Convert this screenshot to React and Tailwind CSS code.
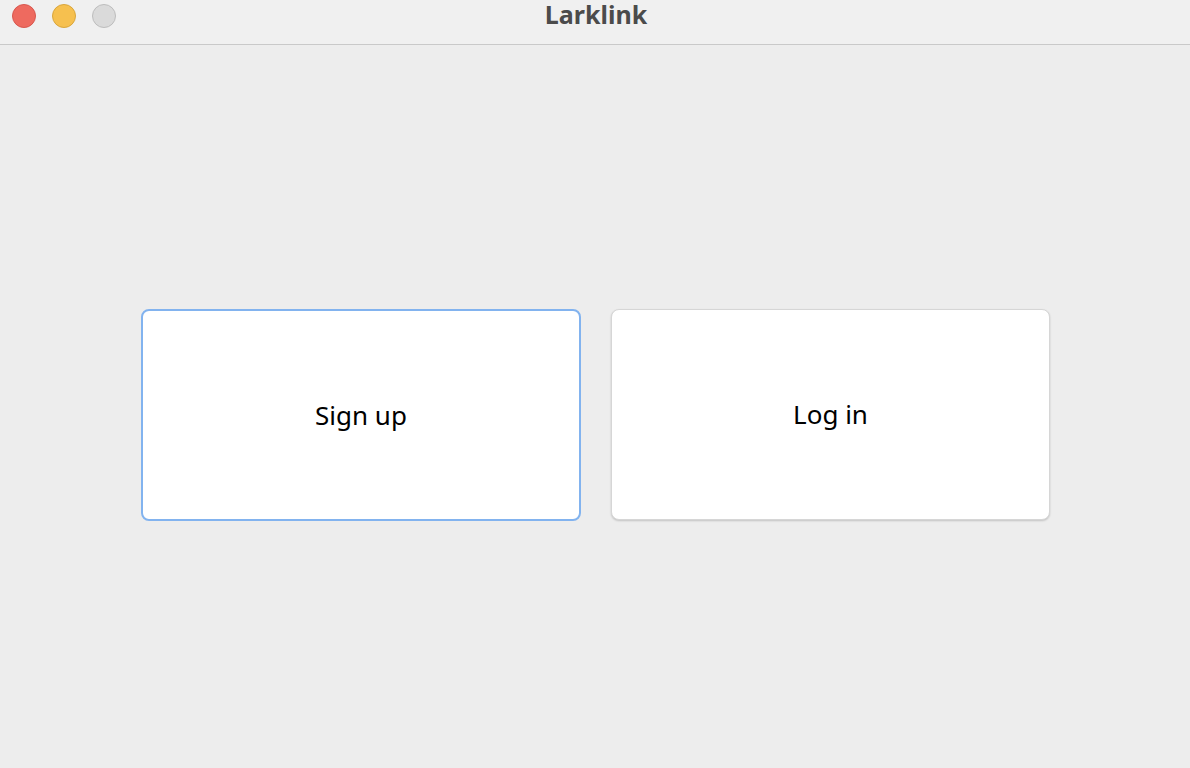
import React from "react";

export default function App() {
  return (
    <div className="flex h-[768px] w-[1190px] flex-col bg-[#ededed] font-['Noto_Sans',sans-serif]">
      <div className="relative flex h-[45px] shrink-0 items-start justify-center border-b border-[#c9c9c9] bg-[#f0f0f0] pt-[1px]">
        <div className="absolute left-[12px] top-[4px] flex gap-[16px]">
          <span className="h-[24px] w-[24px] rounded-full border border-[#d8574e] bg-[#ee6a5f]" />
          <span className="h-[24px] w-[24px] rounded-full border border-[#d9a63c] bg-[#f6c04f]" />
          <span className="h-[24px] w-[24px] rounded-full border border-[#bdbdbd] bg-[#dadada]" />
        </div>
        <h1 className="pl-[2px] text-[25px] leading-[27px] font-bold text-[#4b4b4b]">Larklink</h1>
      </div>

      <div className="flex flex-1 items-start justify-center gap-[30px] pl-[1px] pt-[264px]">
        <button className="flex h-[212px] w-[440px] items-center justify-center rounded-[8px] border-2 border-[#82b3ef] bg-white text-[26px] text-black">
          Sign up
        </button>
        <button className="flex h-[211px] w-[439px] items-center justify-center rounded-[8px] border border-[#d6d6d6] bg-white text-[26px] text-black shadow-[0_1px_2px_rgba(0,0,0,0.18)]">
          Log in
        </button>
      </div>
    </div>
  );
}
